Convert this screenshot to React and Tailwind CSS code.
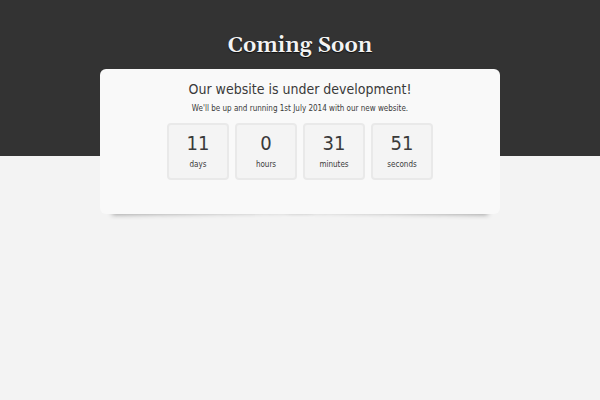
import React from 'react';

const countdown = [
    { label: 'days', value: 11 },
    { label: 'hours', value: 0 },
    { label: 'minutes', value: 31 },
    { label: 'seconds', value: 51 }
];

function CountdownBox({ value, label }) {
    return (
        <div className="w-[62px] rounded-sm border-2 border-[#e9e9e9] bg-[#f4f4f4] pt-0.5 pb-[7px] text-center">
            <div className="text-xl leading-8">{value}</div>
            <div className="text-[8px] leading-3">{label}</div>
        </div>
    );
}

function App() {
    return (
        <div className="min-h-screen bg-[#f3f3f3] font-['DejaVu_Sans_Condensed','DejaVu_Sans',sans-serif] text-[#3a3a3a]">
            <header className="bg-[#333333] px-4 pt-[30px] pb-[94px] text-center">
                <h1 className="font-[Gelasio,Georgia,'DejaVu_Serif',serif] text-[22px] leading-8 font-[650] text-[#f4f4f4] [text-shadow:0_1px_1px_#111]">
                    Coming Soon
                </h1>
            </header>

            <main className="relative isolate mx-auto -mt-[87px] w-2/3">
                {/* Lifted corners shadow */}
                <div className="absolute bottom-2 left-3 -z-10 h-4 w-1/2 -rotate-1 shadow-[0_7px_5px_#999]" />
                <div className="absolute right-3 bottom-2 -z-10 h-4 w-1/2 rotate-1 shadow-[0_7px_5px_#999]" />

                <div className="rounded-md bg-[#f9f9f9] px-4 pt-2 pb-[34px] text-center">
                    <h2 className="text-sm leading-6">Our website is under development!</h2>
                    <p className="mt-0.5 text-[8px] leading-3">
                        We'll be up and running 1st July 2014 with our new website.
                    </p>
                    <div className="mt-2 flex justify-center gap-[6px]">
                        {countdown.map((item) => (
                            <CountdownBox key={item.label} value={item.value} label={item.label} />
                        ))}
                    </div>
                </div>
            </main>
        </div>
    );
}

export default App;
